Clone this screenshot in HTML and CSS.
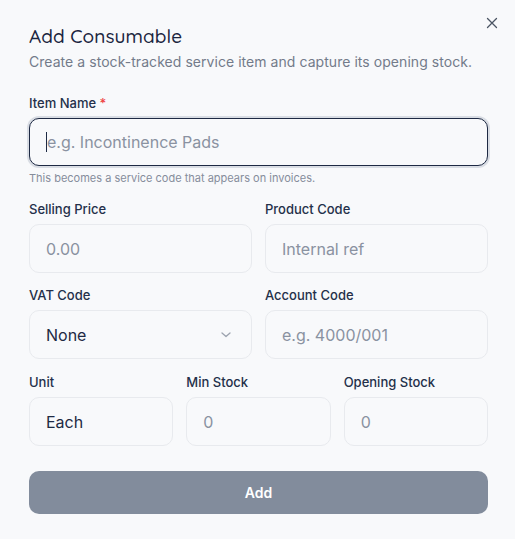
FILE: index.html
```html
<!DOCTYPE html>
<html>
<head>
<meta charset="utf-8">
<link rel="stylesheet" href="styles.css">
</head>
<body>
<div class="dialog">
  <button class="close" aria-label="Close">
    <svg width="12" height="12" viewBox="0 0 12 12"><path d="M1.5 1.5 L10.5 10.5 M10.5 1.5 L1.5 10.5" stroke="#4b5563" stroke-width="1.3" stroke-linecap="round" fill="none"/></svg>
  </button>
  <h2 class="title">Add Consumable</h2>
  <p class="subtitle">Create a stock-tracked service item and capture its opening stock.</p>

  <div class="field first">
    <label class="label">Item Name <span class="req">*</span></label>
    <div class="input focused"><span class="caret"></span><span class="ph">e.g. Incontinence Pads</span></div>
    <p class="help">This becomes a service code that appears on invoices.</p>
  </div>

  <div class="row two">
    <div class="field">
      <label class="label">Selling Price</label>
      <div class="input"><span class="ph">0.00</span></div>
    </div>
    <div class="field">
      <label class="label">Product Code</label>
      <div class="input"><span class="ph">Internal ref</span></div>
    </div>
  </div>

  <div class="row two">
    <div class="field">
      <label class="label">VAT Code</label>
      <div class="input select"><span class="val">None</span>
        <svg width="10" height="6" viewBox="0 0 10 6"><path d="M1 1 L5 4.5 L9 1" stroke="#9ca3af" stroke-width="1.3" fill="none" stroke-linecap="round" stroke-linejoin="round"/></svg>
      </div>
    </div>
    <div class="field">
      <label class="label">Account Code</label>
      <div class="input"><span class="ph">e.g. 4000/001</span></div>
    </div>
  </div>

  <div class="row three">
    <div class="field">
      <label class="label">Unit</label>
      <div class="input"><span class="val">Each</span></div>
    </div>
    <div class="field">
      <label class="label">Min Stock</label>
      <div class="input"><span class="ph">0</span></div>
    </div>
    <div class="field">
      <label class="label">Opening Stock</label>
      <div class="input"><span class="ph">0</span></div>
    </div>
  </div>

  <button class="submit">Add</button>
</div>
</body>
</html>
```

FILE: styles.css
```css
* { box-sizing: border-box; }
html, body { margin: 0; padding: 0; }
body {
  background: #f8f9fb;
  font-family: Inter, "Liberation Sans", sans-serif;
  color: #1e2a44;
  width: 515px;
  height: 539px;
  overflow: hidden;
}
.dialog {
  position: relative;
  padding: 24px 27px 0 29px;
}
.close {
  position: absolute;
  top: 17px;
  right: 17px;
  width: 12px;
  height: 12px;
  padding: 0;
  border: 0;
  background: none;
  display: flex;
}
.title {
  margin: 0;
  font-family: Quicksand, Comfortaa, Lato, sans-serif;
  font-weight: 500;
  font-size: 19px;
  line-height: 24px;
  color: #1b2540;
  letter-spacing: 0.1px;
}
.subtitle {
  margin: 5px 0 0;
  font-size: 14px;
  line-height: 18px;
  color: #737b8a;
  letter-spacing: 0.05px;
}
.field { display: flex; flex-direction: column; min-width: 0; }
.field.first { margin-top: 23px; }
.label {
  font-size: 13px;
  line-height: 18px;
  font-weight: 500;
  color: #24304a;
  margin-bottom: 6px;
}
.req { color: #ef4444; }
.input {
  height: 49px;
  border: 1px solid #e8eaee;
  border-radius: 10px;
  background: #f8f9fb;
  display: flex;
  align-items: center;
  padding: 0 16px;
  font-size: 16px;
}
.input.focused {
  height: 48px;
  border: 1.5px solid #1e2a44;
  box-shadow: 0 0 0 2px #d9dde4;
  padding-left: 16px;
}
.caret {
  display: inline-block;
  width: 1px;
  height: 20px;
  background: #1e2a44;
}
.ph { color: #8a92a1; }
.val { color: #1e2a44; }
.select { justify-content: space-between; padding-right: 20px; }
.help {
  margin: 5px 0 0;
  font-size: 11px;
  line-height: 15px;
  color: #868d9b;
}
.row {
  display: grid;
  gap: 13px;
  margin-top: 13px;
}
.row.two { grid-template-columns: 1fr 1fr; }
.row.three { grid-template-columns: 1fr 1fr 1fr; margin-top: 14px; }
.field.first + .row { margin-top: 14px; }
.submit {
  display: block;
  width: 100%;
  height: 43px;
  margin-top: 25px;
  border: 0;
  border-radius: 10px;
  background: #828c9c;
  color: #fff;
  font-family: Inter, "Liberation Sans", sans-serif;
  font-weight: 600;
  font-size: 14px;
}
```
